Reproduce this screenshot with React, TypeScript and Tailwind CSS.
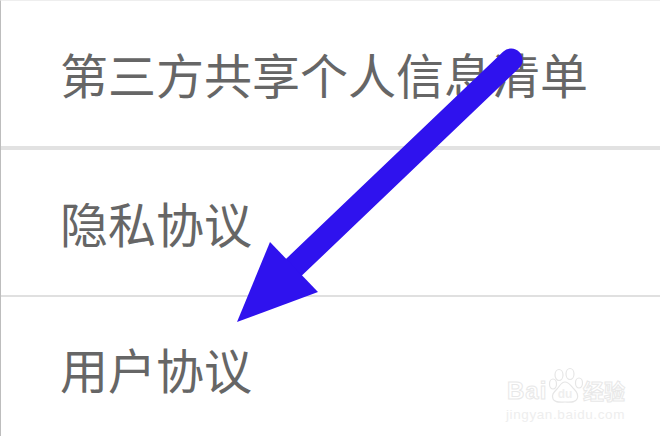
const rows = [
  { label: '第三方共享个人信息清单', height: 'h-[149px]', border: 'border-b-4 border-[#e2e2e2]', pad: 'pb-[2px]' },
  { label: '隐私协议', height: 'h-[147px]', border: 'border-b-2 border-[#e0e0e0]', pad: 'pb-[2px]' },
  { label: '用户协议', height: 'flex-1', border: '', pad: 'pt-[2px]' },
];

function Watermark() {
  return (
    <div className="absolute left-[505px] top-[366px] w-[122px] h-[64px] font-['Liberation_Sans','Noto_Sans_CJK_SC',sans-serif]">
      <span className="absolute left-[1px] top-[9px] text-[24px] leading-[30px] font-bold tracking-[1px] text-transparent [-webkit-text-stroke:1px_#e8e8e8]">Bai</span>
      <svg className="absolute left-[42px] top-0" width="38" height="40" viewBox="0 0 38 40" fill="none" stroke="#e6e6e6" strokeWidth="1.2">
        <ellipse cx="11" cy="8" rx="4" ry="5.5" />
        <ellipse cx="22" cy="7" rx="4" ry="5.5" />
        <ellipse cx="31" cy="16" rx="3.5" ry="5" />
        <ellipse cx="5" cy="17" rx="3.5" ry="5" />
        <path d="M17 15c4 0 6 4 9 7 3 3 5 6 3 10-2 4-7 3-12 3s-10 1-12-3c-2-4 1-7 4-10 3-3 4-7 8-7z" />
        <text x="17" y="31" textAnchor="middle" fontSize="12" fontWeight="700" fill="#efefef" stroke="none">du</text>
      </svg>
      <span className="absolute left-[77px] top-[12px] text-[21px] leading-[26px] font-bold text-transparent [-webkit-text-stroke:1px_#e8e8e8]">经验</span>
      <span className="absolute left-0 top-[40px] text-[13.5px] leading-[16px] tracking-[0.6px] whitespace-nowrap text-[#eeeeee]">jingyan.baidu.com</span>
    </div>
  );
}

export default function App() {
  return (
    <div className="relative w-[660px] h-[436px] overflow-hidden bg-white flex flex-col border-l border-l-[#bdbdbd] border-t border-t-[#eeeeee] font-['Noto_Sans_CJK_SC','Liberation_Sans',sans-serif]">
      {rows.map((row) => (
        <div key={row.label} className={`${row.height} ${row.border} ${row.pad} shrink-0 flex items-center pl-[59px]`}>
          <span className="text-[48px] leading-none text-[#666666] whitespace-nowrap">{row.label}</span>
        </div>
      ))}
      <Watermark />
      <svg className="absolute -left-px -top-px" width="660" height="436" viewBox="0 0 660 436" fill="none">
        <line x1="511" y1="60" x2="290" y2="271" stroke="#2f12ee" strokeWidth="23" strokeLinecap="round" />
        <polygon points="270,242 318,292 237,322" fill="#2f12ee" />
      </svg>
    </div>
  );
}
